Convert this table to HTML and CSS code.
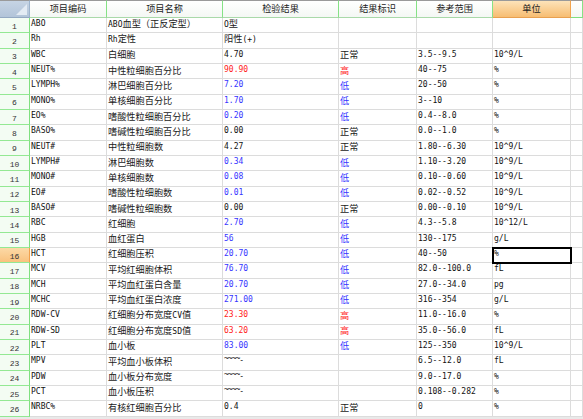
FILE: index.html
```html
<!DOCTYPE html>
<html lang="zh-CN">
<head>
<meta charset="utf-8">
<title>检验结果</title>
<link rel="stylesheet" href="styles.css">
</head>
<body>
<div class="sheet">
  <div class="row head">
    <div class="corner"><span class="tri"></span></div>
    <div class="ch zh">项目编码</div>
    <div class="ch zh">项目名称</div>
    <div class="ch zh">检验结果</div>
    <div class="ch zh">结果标识</div>
    <div class="ch zh">参考范围</div>
    <div class="ch zh sel">单位</div>
    <div class="ch"></div>
  </div>

  <div class="row"><div class="rh">1</div><div class="c">ABO</div><div class="c"><span class="mx">ABO<span class="zh">血型（正反定型）</span></span></div><div class="c"><span class="mx">O<span class="zh">型</span></span></div><div class="c"></div><div class="c"></div><div class="c"></div><div class="c"></div></div>
  <div class="row"><div class="rh">2</div><div class="c">Rh</div><div class="c"><span class="mx">Rh<span class="zh">定性</span></span></div><div class="c"><span class="mx"><span class="zh">阳性</span>(+)</span></div><div class="c"></div><div class="c"></div><div class="c"></div><div class="c"></div></div>
  <div class="row"><div class="rh">3</div><div class="c">WBC</div><div class="c zh">白细胞</div><div class="c">4.70</div><div class="c zh">正常</div><div class="c">3.5--9.5</div><div class="c">10^9/L</div><div class="c"></div></div>
  <div class="row"><div class="rh">4</div><div class="c">NEUT%</div><div class="c zh">中性粒细胞百分比</div><div class="c hi">90.90</div><div class="c zh hi">高</div><div class="c">40--75</div><div class="c">%</div><div class="c"></div></div>
  <div class="row"><div class="rh">5</div><div class="c">LYMPH%</div><div class="c zh">淋巴细胞百分比</div><div class="c lo">7.20</div><div class="c zh lo">低</div><div class="c">20--50</div><div class="c">%</div><div class="c"></div></div>
  <div class="row"><div class="rh">6</div><div class="c">MONO%</div><div class="c zh">单核细胞百分比</div><div class="c lo">1.70</div><div class="c zh lo">低</div><div class="c">3--10</div><div class="c">%</div><div class="c"></div></div>
  <div class="row"><div class="rh">7</div><div class="c">EO%</div><div class="c zh">嗜酸性粒细胞百分比</div><div class="c lo">0.20</div><div class="c zh lo">低</div><div class="c">0.4--8.0</div><div class="c">%</div><div class="c"></div></div>
  <div class="row"><div class="rh">8</div><div class="c">BASO%</div><div class="c zh">嗜碱性粒细胞百分比</div><div class="c">0.00</div><div class="c zh">正常</div><div class="c">0.0--1.0</div><div class="c">%</div><div class="c"></div></div>
  <div class="row"><div class="rh">9</div><div class="c">NEUT#</div><div class="c zh">中性粒细胞数</div><div class="c">4.27</div><div class="c zh">正常</div><div class="c">1.80--6.30</div><div class="c">10^9/L</div><div class="c"></div></div>
  <div class="row"><div class="rh">10</div><div class="c">LYMPH#</div><div class="c zh">淋巴细胞数</div><div class="c lo">0.34</div><div class="c zh lo">低</div><div class="c">1.10--3.20</div><div class="c">10^9/L</div><div class="c"></div></div>
  <div class="row"><div class="rh">11</div><div class="c">MONO#</div><div class="c zh">单核细胞数</div><div class="c lo">0.08</div><div class="c zh lo">低</div><div class="c">0.10--0.60</div><div class="c">10^9/L</div><div class="c"></div></div>
  <div class="row"><div class="rh">12</div><div class="c">EO#</div><div class="c zh">嗜酸性粒细胞数</div><div class="c lo">0.01</div><div class="c zh lo">低</div><div class="c">0.02--0.52</div><div class="c">10^9/L</div><div class="c"></div></div>
  <div class="row"><div class="rh">13</div><div class="c">BASO#</div><div class="c zh">嗜碱性粒细胞数</div><div class="c">0.00</div><div class="c zh">正常</div><div class="c">0.00--0.10</div><div class="c">10^9/L</div><div class="c"></div></div>
  <div class="row"><div class="rh">14</div><div class="c">RBC</div><div class="c zh">红细胞</div><div class="c lo">2.70</div><div class="c zh lo">低</div><div class="c">4.3--5.8</div><div class="c">10^12/L</div><div class="c"></div></div>
  <div class="row"><div class="rh">15</div><div class="c">HGB</div><div class="c zh">血红蛋白</div><div class="c lo">56</div><div class="c zh lo">低</div><div class="c">130--175</div><div class="c">g/L</div><div class="c"></div></div>
  <div class="row"><div class="rh sel">16</div><div class="c">HCT</div><div class="c zh">红细胞压积</div><div class="c lo">20.70</div><div class="c zh lo">低</div><div class="c">40--50</div><div class="c active">%</div><div class="c"></div></div>
  <div class="row"><div class="rh">17</div><div class="c">MCV</div><div class="c zh">平均红细胞体积</div><div class="c lo">76.70</div><div class="c zh lo">低</div><div class="c">82.0--100.0</div><div class="c">fL</div><div class="c"></div></div>
  <div class="row"><div class="rh">18</div><div class="c">MCH</div><div class="c zh">平均血红蛋白含量</div><div class="c lo">20.70</div><div class="c zh lo">低</div><div class="c">27.0--34.0</div><div class="c">pg</div><div class="c"></div></div>
  <div class="row"><div class="rh">19</div><div class="c">MCHC</div><div class="c zh">平均血红蛋白浓度</div><div class="c lo">271.00</div><div class="c zh lo">低</div><div class="c">316--354</div><div class="c">g/L</div><div class="c"></div></div>
  <div class="row"><div class="rh">20</div><div class="c">RDW-CV</div><div class="c"><span class="mx"><span class="zh">红细胞分布宽度</span>CV<span class="zh">值</span></span></div><div class="c hi">23.30</div><div class="c zh hi">高</div><div class="c">11.0--16.0</div><div class="c">%</div><div class="c"></div></div>
  <div class="row"><div class="rh">21</div><div class="c">RDW-SD</div><div class="c"><span class="mx"><span class="zh">红细胞分布宽度</span>SD<span class="zh">值</span></span></div><div class="c hi">63.20</div><div class="c zh hi">高</div><div class="c">35.0--56.0</div><div class="c">fL</div><div class="c"></div></div>
  <div class="row"><div class="rh">22</div><div class="c">PLT</div><div class="c zh">血小板</div><div class="c lo">83.00</div><div class="c zh lo">低</div><div class="c">125--350</div><div class="c">10^9/L</div><div class="c"></div></div>
  <div class="row"><div class="rh">23</div><div class="c">MPV</div><div class="c zh">平均血小板体积</div><div class="c"><span class="tl">~~~~</span>-</div><div class="c"></div><div class="c">6.5--12.0</div><div class="c">fL</div><div class="c"></div></div>
  <div class="row"><div class="rh">24</div><div class="c">PDW</div><div class="c zh">血小板分布宽度</div><div class="c"><span class="tl">~~~~</span>-</div><div class="c"></div><div class="c">9.0--17.0</div><div class="c">%</div><div class="c"></div></div>
  <div class="row"><div class="rh">25</div><div class="c">PCT</div><div class="c zh">血小板压积</div><div class="c"><span class="tl">~~~~</span>-</div><div class="c"></div><div class="c">0.108--0.282</div><div class="c">%</div><div class="c"></div></div>
  <div class="row"><div class="rh">26</div><div class="c">NRBC%</div><div class="c zh">有核红细胞百分比</div><div class="c">0.4</div><div class="c zh">正常</div><div class="c">0</div><div class="c">%</div><div class="c"></div></div>
</div>
</body>
</html>
```
FILE: styles.css
```css
html, body {
  margin: 0;
  padding: 0;
}
body {
  width: 583px;
  height: 419px;
  overflow: hidden;
  background: #e9e9e9;
  font-family: "DejaVu Sans Mono", "Noto Sans CJK SC", monospace;
  font-size: 8px;
  color: #111;
}
.sheet {
  display: flex;
  flex-direction: column;
  background: #fff;
}
.row {
  display: grid;
  grid-template-columns: 30px 77px 116px 116px 78px 76px 78px 12px;
  height: 15.33px;
}
.row.head {
  height: 18px;
}
.zh {
  font-family: "Noto Sans CJK SC", sans-serif;
  font-size: 9.2px;
  color: #1a1a1a;
}
.c {
  box-sizing: border-box;
  border-right: 1px solid #dcdcdc;
  border-bottom: 1px solid #dcdcdc;
  padding: 0 0 2px 1px;
  display: flex;
  align-items: center;
  white-space: nowrap;
  line-height: 1;
}
.c .zh {
  line-height: 11px;
}
.mx {
  line-height: 11px;
}
.tl {
  position: relative;
  top: -2px;
  letter-spacing: -1px;
}
.hi, .hi.zh { color: #ff1a1a; }
.lo, .lo.zh { color: #3535ff; }
.active {
  outline: 2px solid #000;
  outline-offset: -1px;
  position: relative;
  z-index: 1;
}
.rh {
  box-sizing: border-box;
  background: #f3fcf3;
  border-right: 1px solid #7fe07f;
  border-bottom: 1px solid #93e893;
  display: flex;
  align-items: center;
  justify-content: center;
  padding-top: 2px;
  font-family: "Liberation Mono", monospace;
  font-size: 8px;
  color: #333;
}
.rh.sel {
  background: linear-gradient(#fcd9a6, #f9c27e);
  border-right-color: #f1a04a;
}
.corner {
  box-sizing: border-box;
  border-top: 1px solid #9a9a9a;
  background: linear-gradient(#c6d4e4, #b2c4d9);
  border-right: 1px solid #9cb3cc;
  border-bottom: 1px solid #93a9c2;
  position: relative;
}
.tri {
  position: absolute;
  right: 2px;
  bottom: 2px;
  width: 0;
  height: 0;
  border-left: 11px solid transparent;
  border-bottom: 11px solid #e3ebf4;
}
.ch {
  box-sizing: border-box;
  border-top: 1px solid #9a9a9a;
  background: linear-gradient(#ffffff, #f4f7f4);
  border-right: 1px solid #86e286;
  border-bottom: 1px solid #a9d9a9;
  display: flex;
  align-items: center;
  justify-content: center;
  color: #222;
  line-height: 1;
}
.ch.sel {
  background: linear-gradient(#fde3b9, #f7bd72);
  border-right-color: #f2a44e;
  border-bottom-color: #e8a050;
}
.ch:last-child {
  border-bottom-color: #7fe07f;
}
```
